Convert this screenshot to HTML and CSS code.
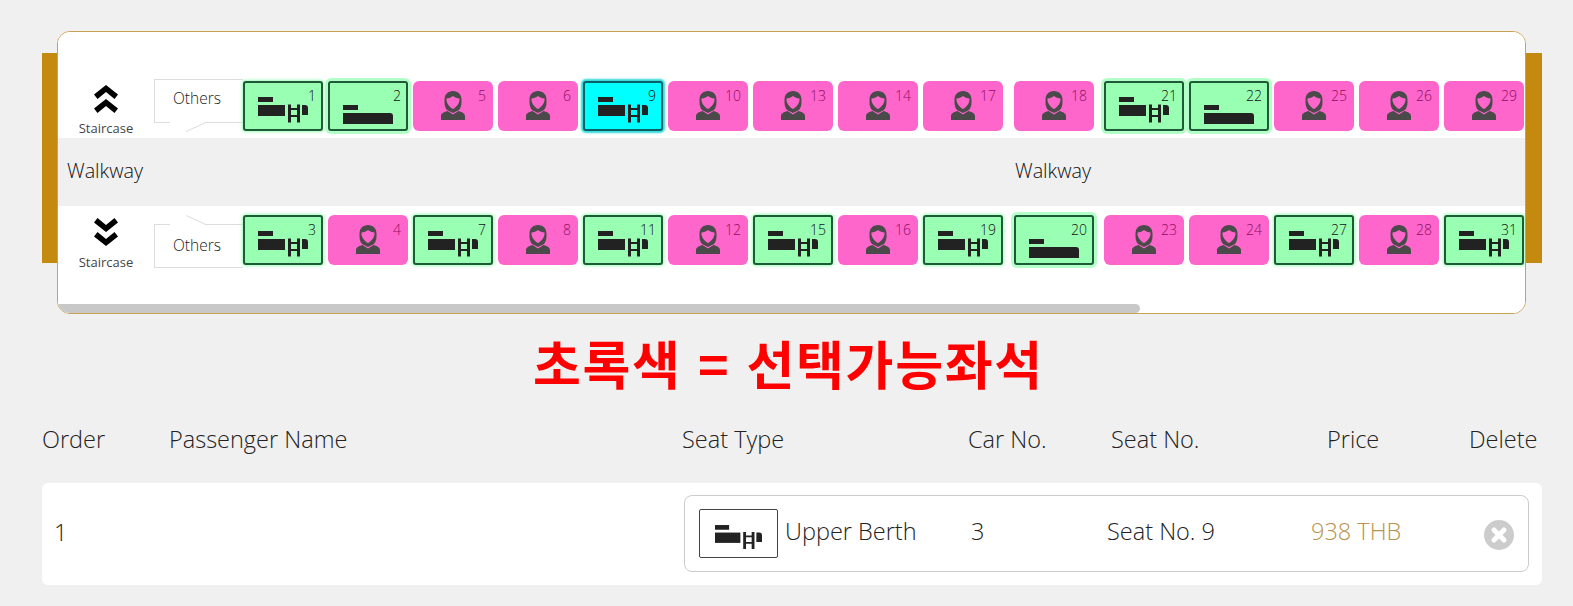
FILE: index.html
```html
<!DOCTYPE html>
<html lang="ko">
<head>
    <meta charset="UTF-8">
    <meta name="viewport" content="width=device-width, initial-scale=1.0">
    <title>Seat selection</title>
    <link rel="stylesheet" href="styles.css">
</head>
<body>
    <svg class="sprites" width="0" height="0">
        <symbol id="upper" viewBox="0 0 80 50">
            <rect x="15" y="16" width="15" height="5"/>
            <rect x="15" y="24" width="27" height="11"/>
            <path d="M45 23.500h3v3.500h6v-3.500h3v18h-3v-5.500h-6v5.500h-3zM48 29v5h6v-5z"/>
            <path d="M59 24h3q3 0 3 3v7h-6z"/>
        </symbol>
        <symbol id="lower" viewBox="0 0 80 50">
            <rect x="15" y="24" width="15" height="5"/>
            <path d="M15 32h47q3 0 3 3v8h-50z"/>
        </symbol>
        <symbol id="lady" viewBox="0 0 80 50">
            <path d="M28 39v-4c0-2.500 2-3.500 6.500-5l5.500 3.500 5.500-3.500c4.500 1.500 6.500 2.500 6.500 5v4z"/>
            <path fill-rule="evenodd" d="M40 10c5 0 8.500 3.500 8.500 8.500v3c0 3-1 6-2.500 7.500l-6 3-6-3c-1.500-1.500-2.500-4.500-2.500-7.500v-3c0-5 3.500-8.500 8.500-8.500zM33.500 17.500c2.500 0 4.500-1 6.500-2.500 2 1.500 4 2.500 6.500 2.500 .5 4-2.500 8.500-6.500 10.500-4-2-7-6.500-6.500-10.500z"/>
        </symbol>
    </svg>

    <main class="page">
        <section class="train">
            <div class="train-cap"></div>
            <div class="coach">
                <div class="deck deck-top">
                    <div class="stairs">
                        <svg class="stairs-icon" viewBox="0 0 26 28"><path d="M13 0l12 9.500-3.500 4.500-8.500-7-8.500 7-3.500-4.500zM13 14l12 9.500-3.500 4.500-8.500-7-8.500 7-3.500-4.500z"/></svg>
                        <span>Staircase</span>
                    </div>
                    <div class="others others-top">
                        Others
                        <svg class="tail" viewBox="0 0 36 10"><path class="tail-fill" d="M0 0h36L16 9H0z"/><path class="tail-line" d="M36 .5L16 9.500"/></svg>
                    </div>
                    <div class="seats" id="row-top"></div>
                </div>
                <div class="walkway">
                    <span class="walkway-a">Walkway</span>
                    <span class="walkway-b">Walkway</span>
                </div>
                <div class="deck deck-bottom">
                    <div class="stairs">
                        <svg class="stairs-icon" viewBox="0 0 26 28"><path d="M13 14l12-9.500-3.500-4.500-8.500 7-8.500-7-3.500 4.500zM13 28l12-9.500-3.500-4.500-8.500 7-8.500-7-3.500 4.500z"/></svg>
                        <span>Staircase</span>
                    </div>
                    <div class="others others-bottom">
                        Others
                        <svg class="tail" viewBox="0 0 36 10"><path class="tail-fill" d="M0 10h36L16 1H0z"/><path class="tail-line" d="M36 9.500L16 .5"/></svg>
                    </div>
                    <div class="seats" id="row-bottom"></div>
                </div>
                <div class="scroll-track"><div class="scroll-thumb"></div></div>
            </div>
            <div class="train-cap"></div>
        </section>

        <h2 class="notice">초록색 = 선택가능좌석</h2>

        <div class="cols cols-head">
            <div>Order</div>
            <div>Passenger Name</div>
            <div>Seat Type</div>
            <div>Car No.</div>
            <div>Seat No.</div>
            <div>Price</div>
            <div>Delete</div>
        </div>

        <div class="order">
            <div class="order-no">1</div>
            <div class="order-box">
                <div class="berth-icon"><svg><use href="#upper"/></svg></div>
                <div class="berth-name">Upper Berth</div>
                <div class="car-no">3</div>
                <div class="seat-no">Seat No. 9</div>
                <div class="price">938 THB</div>
                <svg class="del" viewBox="0 0 30 30"><circle cx="15" cy="15" r="15"/><path d="M10 10l10 10M20 10L10 20"/></svg>
            </div>
        </div>
    </main>

    <script>
        // type: u = upper berth, l = lower berth, f = lady seat
        const rowTop = [
            [1, "u", "a"], [2, "l", "b"], [5, "f"], [6, "f"], [9, "u", "on"], [10, "f"], [13, "f"], [14, "f"], [17, "f"],
            [18, "f"], [21, "u", "b"], [22, "l", "b"], [25, "f"], [26, "f"], [29, "f"]
        ];
        const rowBottom = [
            [3, "u", "a"], [4, "f"], [7, "u", "a"], [8, "f"], [11, "u", "a"], [12, "f"], [15, "u", "a"], [16, "f"], [19, "u", "a"],
            [20, "l", "b"], [23, "f"], [24, "f"], [27, "u", "a"], [28, "f"], [31, "u", "a"]
        ];
        const icons = { u: "upper", l: "lower", f: "lady" };

        function drawRow(id, seats) {
            const row = document.getElementById(id);
            seats.forEach((s, i) => {
                const seat = document.createElement("div");
                seat.className = "seat seat-" + s[1] + (s[2] ? " seat-" + s[2] : "") + (i == 9 || i == 10 ? " seat-gap" : "");
                seat.innerHTML = `<svg><use href="#${icons[s[1]]}"/></svg><span class="seat-no-label">${s[0]}</span>`;
                row.appendChild(seat);
            });
        }

        drawRow("row-top", rowTop);
        drawRow("row-bottom", rowBottom);
    </script>
</body>
</html>
```

FILE: styles.css
```css
* {
    margin: 0;
    padding: 0;
    box-sizing: border-box;
}

body {
    background-color: #f0f0f0;
    color: #222;
    font-family: "Open Sans", "Noto Sans CJK KR", sans-serif;
    font-weight: 300;
    overflow: hidden;
}

.sprites {
    display: block;
    height: 0;
}

.page {
    width: 1500px;
    margin-left: 42px;
}

/* train */
.train {
    display: flex;
    padding-top: 31px;
}

.train-cap {
    width: 16px;
    height: 210px;
    margin-top: 22px;
    background-color: #c48a10;
}

.train-cap:first-child {
    width: 15px;
}

.coach {
    width: 1470px;
    height: 283px;
    background-color: #fff;
    border: 1px solid #c9a253;
    border-radius: 13px;
    overflow: hidden;
    display: flex;
    flex-direction: column;
}

.deck {
    display: flex;
    flex: none;
    width: 1600px;
    background-color: #fff;
}

.deck-top {
    height: 106px;
    padding-top: 49px;
}

.deck-bottom {
    height: 98px;
    padding-top: 9px;
}

.stairs {
    width: 96px;
    flex: none;
    display: flex;
    flex-direction: column;
    align-items: center;
    font-size: 13px;
    font-weight: 400;
    color: #444;
}

.stairs-icon {
    width: 26px;
    height: 28px;
    margin-top: 4px;
    margin-bottom: 6px;
}

.deck-bottom .stairs-icon {
    margin-top: 3px;
    margin-bottom: 7px;
}

.others {
    position: relative;
    width: 89px;
    height: 44px;
    flex: none;
    border: 1px solid #ddd;
    border-right: 0;
    font-size: 15.500px;
    font-weight: 300;
    color: #222;
    text-align: center;
    padding-right: 4px;
    line-height: 36px;
}

.others-top {
    margin-top: -2px;
}

.others-bottom {
    margin-top: 9px;
    line-height: 40px;
}

.tail {
    position: absolute;
    left: 15px;
    width: 36px;
    height: 10px;
    overflow: visible;
}

.others-top .tail {
    top: 42px;
}

.others-bottom .tail {
    top: -10px;
}

.tail-fill {
    fill: #fff;
}

.tail-line {
    fill: none;
    stroke: #ddd;
    stroke-width: 1;
}

.seats {
    display: flex;
    gap: 5px;
    flex: none;
    height: 50px;
}

.seat {
    position: relative;
    width: 80px;
    height: 50px;
    flex: none;
    border-radius: 6px;
    background-color: #ff66cc;
    color: #8c1060;
    font-size: 14px;
    font-weight: 300;
}

.seat svg {
    display: block;
    width: 80px;
    height: 50px;
    fill: #222;
}

.seat-f svg {
    fill: #4a4a4a;
}

.seat-u,
.seat-l {
    background-color: #99ffb3;
    color: #111;
    border-radius: 3px;
}

.seat-a {
    outline: 2px solid #1f5a38;
    outline-offset: -2px;
    box-shadow: 0 0 3px 1px #99ffb3;
}

.seat-b {
    outline: 2px solid #1f5a38;
    outline-offset: -2px;
    box-shadow: 0 0 0 3px #b3ffc8;
}

.seat-on {
    background-color: #00ffff;
    outline: 2px solid #0d5f66;
    outline-offset: -2px;
    box-shadow: 0 0 2px 2px #2fd8d8;
}

.seat-gap {
    margin-left: 5px;
}

.seat-gap:nth-child(10) {
    margin-left: 6px;
}

.seat-no-label {
    position: absolute;
    top: 6px;
    right: 7px;
    line-height: 18px;
}

/* walkway */
.walkway {
    display: flex;
    flex: none;
    height: 68px;
    padding-bottom: 4px;
    align-items: center;
    background-color: #f0f0f0;
    color: #111;
    font-size: 19.800px;
    font-weight: 300;
}

.walkway-a {
    margin-left: 9px;
    width: 948px;
}

/* fake scrollbar, the real list runs further right */
.scroll-track {
    flex: none;
    height: 9px;
    background-color: #fff;
}

.scroll-thumb {
    width: 1082px;
    height: 9px;
    background-color: #c8c8c8;
    border-radius: 0 5px 5px 0;
}

/* notice */
.notice {
    margin-top: 18px;
    height: 62px;
    padding-left: 491px;
    color: #f00;
    font-family: "Noto Sans CJK KR", sans-serif;
    font-size: 52px;
    font-weight: 700;
    letter-spacing: 1.700px;
    line-height: 62px;
    white-space: nowrap;
}

/* order table */
.cols-head {
    display: flex;
    margin-top: 30px;
    height: 30px;
    font-size: 23.500px;
    line-height: 30px;
    color: #222;
}

.cols-head div:nth-child(1) { width: 127px; }
.cols-head div:nth-child(2) { width: 513px; }
.cols-head div:nth-child(3) { width: 286px; }
.cols-head div:nth-child(4) { width: 143px; }
.cols-head div:nth-child(5) { width: 216px; }
.cols-head div:nth-child(6) { width: 142px; }

.order {
    display: flex;
    align-items: center;
    height: 102px;
    margin-top: 29px;
    padding-left: 12px;
    background-color: #fff;
    border-radius: 6px;
    font-size: 23.500px;
}

.order-no {
    width: 630px;
    margin-bottom: 4px;
}

.order-box {
    display: flex;
    align-items: center;
    width: 845px;
    height: 77px;
    margin-top: -2px;
    padding-left: 14px;
    border: 1px solid #ccc;
    border-radius: 8px;
}

.berth-icon {
    width: 79px;
    height: 49px;
    flex: none;
    border: 1px solid #444;
    border-radius: 2px;
}

.berth-icon svg {
    display: block;
    width: 77px;
    height: 47px;
    fill: #222;
}

.berth-name,
.car-no,
.seat-no,
.price {
    margin-bottom: 4px;
}

.berth-name {
    width: 186px;
    margin-left: 7px;
}

.car-no {
    width: 136px;
}

.seat-no {
    width: 204px;
}

.price {
    width: 173px;
    color: #b8924c;
}

.del {
    width: 30px;
    height: 30px;
    flex: none;
    margin-top: 3px;
    fill: #ccc;
}

.del path {
    fill: none;
    stroke: #fff;
    stroke-width: 5;
    stroke-linecap: round;
}
```
